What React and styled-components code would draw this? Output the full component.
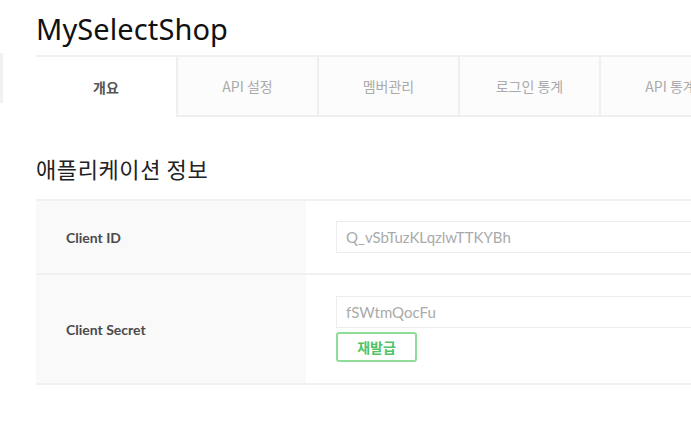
import React from 'react'
import styled, {createGlobalStyle} from 'styled-components'

const GlobalStyle = createGlobalStyle`
  html, body {
    margin: 0;
    padding: 0;
    background: #fff;
    overflow: hidden;
  }
  body {
    font-family: "Noto Sans", "Noto Sans CJK KR", sans-serif;
  }
`

const tabs = ['개요', 'API 설정', '멤버관리', '로그인 통계', 'API 통계']

export default function App() {
  return (
    <Page>
      <GlobalStyle />
      <SideEdge />
      <Main>
        <Title>MySelectShop</Title>
        <TabBar>
          {tabs.map((t, i) => (
            <Tab key={t} active={i === 0}>{t}</Tab>
          ))}
        </TabBar>
        <SectionTitle>애플리케이션 정보</SectionTitle>
        <InfoTable>
          <Row>
            <Label>Client ID</Label>
            <Cell>
              <Field>Q_vSbTuzKLqzlwTTKYBh</Field>
            </Cell>
          </Row>
          <Row tall>
            <Label>Client Secret</Label>
            <Cell>
              <Field>fSWtmQocFu</Field>
              <ReissueButton>재발급</ReissueButton>
            </Cell>
          </Row>
        </InfoTable>
      </Main>
    </Page>
  )
}

const Page = styled.div`
  display: flex;
  width: 800px;
  height: 427px;
`

const SideEdge = styled.div`
  width: 3px;
  height: 50px;
  margin-top: 53px;
  background: #f1f1f1;
  flex-shrink: 0;
`

const Main = styled.div`
  margin-left: 33px;
  width: 760px;
`

const Title = styled.h1`
  margin: 0;
  padding-top: 12px;
  height: 55px;
  box-sizing: border-box;
  font-size: 29px;
  font-weight: 400;
  color: #111;
  line-height: 34px;
  letter-spacing: 0.1px;
`

const TabBar = styled.div`
  display: flex;
  border-top: 2px solid #f0f0f0;
`

const Tab = styled.div`
  width: 141px;
  flex-shrink: 0;
  height: 60px;
  display: flex;
  align-items: center;
  justify-content: center;
  box-sizing: border-box;
  font-family: "Noto Sans CJK KR", sans-serif;
  font-size: 14px;
  font-weight: ${p => (p.active ? 700 : 400)};
  color: ${p => (p.active ? '#555' : '#aaa')};
  background: ${p => (p.active ? '#fff' : '#fcfcfc')};
  border-left: ${p => (p.active ? 'none' : '2px solid #efefef')};
  border-bottom: ${p => (p.active ? 'none' : '2px solid #efefef')};
  &:first-child {
    width: 140px;
  }
`

const SectionTitle = styled.h2`
  margin: 0;
  padding: 36px 0 16px;
  font-family: "Noto Sans CJK KR", sans-serif;
  font-size: 22px;
  font-weight: 400;
  color: #222;
  line-height: 30px;
  letter-spacing: 0.6px;
`

const InfoTable = styled.div`
  border-top: 2px solid #f0f0f0;
`

const Row = styled.div`
  display: flex;
  height: ${p => (p.tall ? '108px' : '72px')};
  border-bottom: 2px solid #f0f0f0;
`

const Label = styled.div`
  width: 270px;
  flex-shrink: 0;
  padding-left: 30px;
  box-sizing: border-box;
  background: #f9f9f9;
  display: flex;
  align-items: center;
  font-family: Lato, "Noto Sans", sans-serif;
  font-size: 14px;
  font-weight: 700;
  color: #4a4a4a;
`

const Cell = styled.div`
  flex: 1;
  padding-left: 30px;
  display: flex;
  flex-direction: column;
  justify-content: center;
  gap: 4px;
`

const Field = styled.div`
  width: 420px;
  height: 32px;
  box-sizing: border-box;
  border: 1px solid #ececec;
  padding-left: 9px;
  display: flex;
  align-items: center;
  font-family: Lato, "Noto Sans", sans-serif;
  font-size: 15px;
  color: #aaa;
`

const ReissueButton = styled.button`
  width: 81px;
  height: 30px;
  box-sizing: border-box;
  border: 2px solid #8fdb98;
  border-radius: 3px;
  background: #fff;
  font-family: "Noto Sans CJK KR", sans-serif;
  font-size: 14px;
  font-weight: 700;
  color: #52c267;
  padding: 0;
`
